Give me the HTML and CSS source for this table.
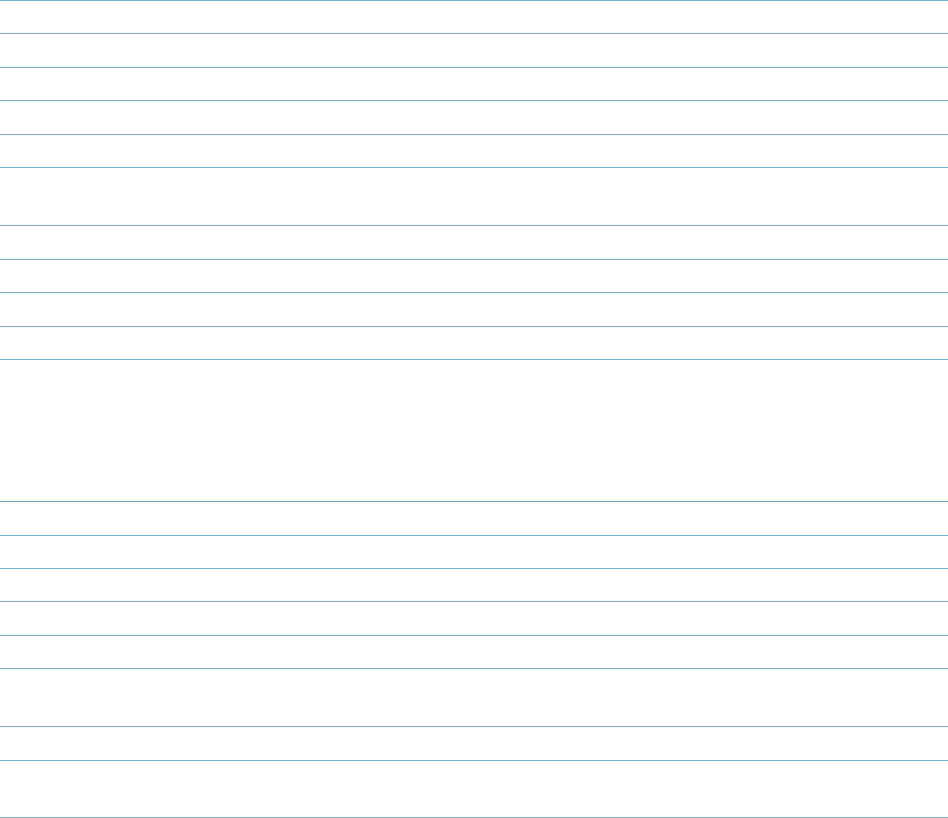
FILE: index.html
```html
<!DOCTYPE html>
<html lang="en">
<head>
    <meta charset="UTF-8">
    <meta name="viewport" content="width=device-width, initial-scale=1.0">
    <title>Table</title>
    <link rel="stylesheet" href="styles.css">
</head>
<body>
    <table class="sheet">
        <tbody>
            <tr><td class="key"></td><td class="val"></td></tr>
            <tr><td class="key"></td><td class="val"></td></tr>
            <tr><td class="key"></td><td class="val"></td></tr>
            <tr><td class="key"></td><td class="val"></td></tr>
            <tr><td class="key"></td><td class="val"></td></tr>
            <tr class="double"><td class="key"></td><td class="val"></td></tr>
            <tr><td class="key"></td><td class="val"></td></tr>
            <tr><td class="key"></td><td class="val"></td></tr>
            <tr><td class="key"></td><td class="val"></td></tr>
            <tr><td class="key"></td><td class="val"></td></tr>
            <tr class="tall"><td class="key"></td><td class="val"></td></tr>
            <tr><td class="key"></td><td class="val"></td></tr>
            <tr><td class="key"></td><td class="val"></td></tr>
            <tr><td class="key"></td><td class="val"></td></tr>
            <tr><td class="key"></td><td class="val"></td></tr>
            <tr><td class="key"></td><td class="val"></td></tr>
            <tr class="double"><td class="key"></td><td class="val"></td></tr>
            <tr><td class="key"></td><td class="val"></td></tr>
            <tr class="double last"><td class="key"></td><td class="val"></td></tr>
        </tbody>
    </table>
</body>
</html>
```

FILE: styles.css
```css
* {
    margin: 0;
    padding: 0;
    box-sizing: border-box;
}

body {
    background: #ffffff;
    font-family: 'Liberation Sans', Arial, sans-serif;
    font-size: 14px;
    color: #333;
}

.sheet {
    width: 948px;
    border-collapse: separate;
    border-spacing: 0;
    table-layout: fixed;
    border-top: 1px solid #7ab0c4;
}

.sheet td {
    height: 33.44px;
    padding: 0;
    border-bottom: 1px solid #7ab0c4;
}

.sheet .key {
    width: 247px;
}

.sheet tr.double td {
    height: 58.1px;
}

.sheet tr.tall td {
    height: 142.1px;
}

.sheet tr.last td {
    height: 57.5px;
}
```
